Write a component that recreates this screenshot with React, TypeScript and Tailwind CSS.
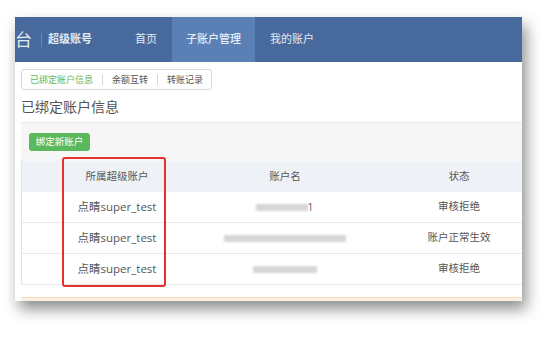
import React from 'react';

const rows = [
    { owner: '点睛super_test', blur: 'w-[52px]', tail: '1', status: '审核拒绝' },
    { owner: '点睛super_test', blur: 'w-[122px]', tail: '', status: '账户正常生效' },
    { owner: '点睛super_test', blur: 'w-[64px]', tail: '', status: '审核拒绝' },
];

export default function App() {
    return (
        <div
            className="relative w-[558px] h-[338px] overflow-hidden bg-white pt-[17px] pl-[15px]"
            style={{ fontFamily: '"Open Sans", "Noto Sans CJK SC", sans-serif' }}
        >
            <div className="w-[507px] h-[284px] bg-white overflow-hidden flex flex-col shadow-[4px_8px_14px_rgba(0,0,0,0.45)]">
                {/* top nav */}
                <div className="h-[45px] shrink-0 bg-[#47699b] flex items-stretch text-[#e3e9f3] whitespace-nowrap">
                    <div className="flex items-center w-[120px] shrink-0">
                        <span className="text-[17px] leading-none">台</span>
                        <span className="ml-[9px] w-px h-[14px] bg-[#6d89b2]" />
                        <span className="ml-[6px] text-[11px] font-bold">超级账号</span>
                    </div>
                    <div className="flex items-center w-[37px] shrink-0 text-[11px]">首页</div>
                    <div className="flex items-center justify-center w-[83px] shrink-0 bg-[#5b80b5] text-[11px] text-white">子账户管理</div>
                    <div className="flex items-center pl-[15px] text-[11px]">我的账户</div>
                </div>

                <div className="pl-[6px] flex flex-col">
                    {/* sub tabs */}
                    <div className="mt-[7px] w-[191px] h-[21px] border border-[#d9d9d9] rounded-[3px] flex items-center px-[8px] text-[9px] text-[#555] whitespace-nowrap">
                        <span className="text-[#5cb85c]">已绑定账户信息</span>
                        <span className="mx-[9px] w-px h-[11px] bg-[#d5d5d5] shrink-0" />
                        <span>余额互转</span>
                        <span className="mx-[9px] w-px h-[11px] bg-[#d5d5d5] shrink-0" />
                        <span>转账记录</span>
                    </div>

                    <div className="mt-[7px] text-[14px] leading-[20px] text-[#555]">已绑定账户信息</div>

                    {/* panel */}
                    <div className="mt-[5px] bg-[#f6f6f6] border-t border-[#ececec] w-[560px]">
                        <div className="pt-[10px] pb-[10px] pl-[8px]">
                            <div className="w-[61px] h-[18px] bg-[#5cb85c] rounded-[3px] flex items-center justify-center text-[9.5px] text-white">
                                绑定新账户
                            </div>
                        </div>

                        <div className="bg-white border-l border-[#e3e3e3] text-[10.5px] text-[#555]">
                            <div className="h-[31px] bg-[#eef2f7] flex items-center text-[#555]">
                                <div className="w-[190px] text-center">所属超级账户</div>
                                <div className="w-[146px] text-center">账户名</div>
                                <div className="w-[202px] text-center">状态</div>
                            </div>
                            {rows.map((r, i) => (
                                <div key={i} className="h-[31px] flex items-center border-b border-[#e8e8e8]">
                                    <div className="w-[190px] text-center text-[11.5px]">{r.owner}</div>
                                    <div className="w-[146px] flex justify-center items-center">
                                        <span className={`${r.blur} h-[7px] bg-[#d6d6d6] blur-[1.2px]`} />
                                        {r.tail && <span className="text-[11px] text-[#666] -ml-[1px]">{r.tail}</span>}
                                    </div>
                                    <div className="w-[202px] text-center">{r.status}</div>
                                </div>
                            ))}
                        </div>
                    </div>
                    <div className="bg-white h-[12px] w-[560px]" />
                    <div className="h-[4px] w-[560px] bg-[#fbeee3] border-t border-[#f7d9c2]" />
                </div>
            </div>

            {/* highlight */}
            <div className="absolute left-[62px] top-[157px] w-[104px] h-[130px] border-2 border-[#e5312f] rounded-[3px]" />
        </div>
    );
}
